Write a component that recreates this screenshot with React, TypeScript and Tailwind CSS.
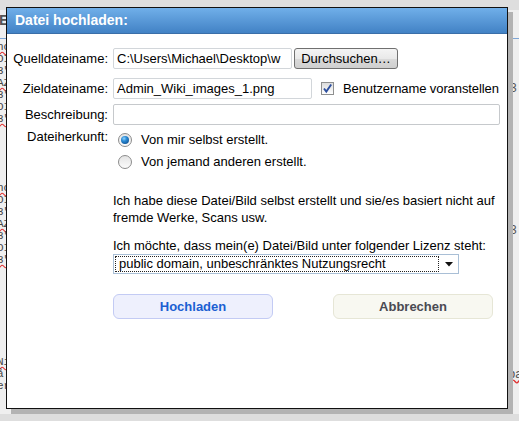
import React from 'react';

// wiki page lines peeking out behind the modal on the left edge
const backdropGroups = [
  { gap: 'mt-[2px]', lines: ['nc', 'OI', '3"', 'AZ', '3"', 'OI', '3"'] },
  { gap: 'mt-[57px]', lines: ['nc', 'OI', '3"', 'AZ', '3"', 'OI', '3"'] },
  { gap: 'mt-[90px]', lines: ['Ni', 'å', 'er'] },
];

function Radio({ checked }: { checked: boolean }) {
  return (
    <span className="flex h-[14px] w-[14px] shrink-0 items-center justify-center rounded-full border border-[#8c8c8c] bg-[linear-gradient(180deg,#e4e4e4,#fbfbfb)]">
      {checked && (
        <span className="h-[8px] w-[8px] rounded-full bg-[radial-gradient(circle_at_38%_32%,#8fd3ff_0%,#2a8ad4_35%,#0b3f7c_100%)]" />
      )}
    </span>
  );
}

function Checkbox() {
  return (
    <span className="flex h-[13px] w-[13px] shrink-0 items-center justify-center border border-[#8e8f8f] bg-[linear-gradient(180deg,#dcdcdc,#ffffff)]">
      <svg width="11" height="11" viewBox="0 0 11 11">
        <path d="M2 5.5 L4.3 8.6 L9.2 1.5" fill="none" stroke="#2d4f9e" strokeWidth="1.9" />
      </svg>
    </span>
  );
}

function Field({ label, children, className = '' }: { label: string; children: React.ReactNode; className?: string }) {
  return (
    <div className={`flex items-center ${className}`}>
      <label className="w-[101px] shrink-0 text-right">{label}</label>
      <div className="ml-[5px] flex items-center">{children}</div>
    </div>
  );
}

export default function App() {
  return (
    <div className="relative h-[421px] w-[519px] overflow-hidden bg-[#dedede] font-['Liberation_Sans',Arial,sans-serif] text-[13px] text-black">
      {/* page behind the dialog */}
      <div className="absolute left-0 top-[10px] h-[404px] w-[519px] bg-[#efefef]">
        <div className="ml-[-1px] mt-[2px] text-[15px] font-bold leading-[16px] text-[#555]">E</div>
        <div className="mt-[10px] h-px w-full bg-[#7ea6d6]" />
        <div className="flex flex-col font-['Liberation_Mono',monospace] text-[11px] leading-[12px] text-[#444]">
          {backdropGroups.map((g, i) => (
            <div key={i} className={`flex flex-col ${g.gap}`}>
              {g.lines.map((t, j) => (
                <span key={j} className={`ml-[-3px] ${j % 3 === 0 ? 'underline decoration-wavy decoration-[#e03030]' : ''}`}>
                  {t}
                </span>
              ))}
            </div>
          ))}
        </div>
        <span className="absolute left-[510px] top-[72px] text-[12px] leading-[12px] text-[#555]">3</span>
        <span className="absolute left-[510px] top-[214px] text-[12px] leading-[12px] text-[#555]">3</span>
        <span className="absolute left-[508px] top-[357px] text-[13px] leading-[14px] text-[#555] underline decoration-wavy decoration-[#e03030]">ba</span>
      </div>

      {/* drop shadow */}
      <div className="absolute left-[11px] top-[12px] h-[402px] w-[502px] bg-[#b3b3b3]" />

      {/* upload dialog */}
      <div className="absolute left-[6px] top-[7px] flex h-[402px] w-[502px] flex-col border border-[#111] bg-white">
        <div className="flex h-[26px] shrink-0 items-center border-b border-[#3a6ea8] bg-[linear-gradient(180deg,#70afe9,#4282c5)] pl-[8px]">
          <h1 className="text-[14px] font-bold text-white">Datei hochladen:</h1>
        </div>

        <div className="flex flex-col pt-[14px] leading-[16px]">
          <Field label="Quelldateiname:">
            <div className="flex h-[21px] w-[179px] items-center overflow-hidden whitespace-nowrap rounded-[2px] border border-[#d2d6da] pl-[3px]">
              C:\Users\Michael\Desktop\w
            </div>
            <button className="ml-[2px] h-[21px] w-[104px] rounded-[3px] border border-[#707070] bg-[linear-gradient(180deg,#f4f4f4_0%,#e9e9e9_50%,#dadada_51%,#cfcfcf_100%)] text-[13px]">
              Durchsuchen…
            </button>
          </Field>

          <Field label="Zieldateiname:" className="mt-[9px]">
            <div className="flex h-[21px] w-[199px] items-center whitespace-nowrap rounded-[2px] border border-[#d2d6da] pl-[3px]">
              Admin_Wiki_images_1.png
            </div>
            <span className="ml-[9px]">
              <Checkbox />
            </span>
            <span className="ml-[9px] whitespace-nowrap tracking-[-0.1px]">Benutzername voranstellen</span>
          </Field>

          <Field label="Beschreibung:" className="mt-[5px]">
            <div className="h-[21px] w-[387px] rounded-[2px] border border-[#c6c9cc]" />
          </Field>

          <div className="mt-[4px] flex">
            <span className="w-[101px] shrink-0 text-right leading-[16px]">Dateiherkunft:</span>
            <div className="ml-[10px] flex flex-col">
              <div className="flex h-[22px] items-center">
                <Radio checked />
                <span className="ml-[9px]">Von mir selbst erstellt.</span>
              </div>
              <div className="flex h-[22px] items-center">
                <Radio checked={false} />
                <span className="ml-[9px]">Von jemand anderen erstellt.</span>
              </div>
            </div>
          </div>

          <div className="ml-[106px] flex flex-col">
            <p className="mt-[19px] whitespace-nowrap leading-[17px]">
              Ich habe diese Datei/Bild selbst erstellt und sie/es basiert nicht auf
              <br />
              fremde Werke, Scans usw.
            </p>

            <p className="mt-[12px] whitespace-nowrap leading-[15px]">
              Ich möchte, dass mein(e) Datei/Bild unter folgender Lizenz steht:
            </p>

            <div className="mt-[1px] flex h-[20px] w-[346px] items-center border border-[#a9bfd6] bg-white">
              <div className="ml-px flex h-[16px] w-[324px] items-center whitespace-nowrap border border-dotted border-[#222] pl-[3px]">
                public domain, unbeschränktes Nutzungsrecht
              </div>
              <div className="flex flex-1 items-center justify-center">
                <svg width="8" height="5" viewBox="0 0 8 5">
                  <path d="M0 0 H8 L4 4.5 Z" fill="#111" />
                </svg>
              </div>
            </div>

            <div className="mt-[20px] flex gap-[60px]">
              <button className="h-[25px] w-[160px] rounded-[6px] border border-[#c3cbf4] bg-[#eef0fd] text-[13px] font-bold text-[#1b5fd2]">
                Hochladen
              </button>
              <button className="h-[25px] w-[160px] rounded-[6px] border border-[#e6e6d6] bg-[#f8f8f1] text-[13px] font-bold text-[#4a4a52]">
                Abbrechen
              </button>
            </div>
          </div>
        </div>
      </div>
    </div>
  );
}
